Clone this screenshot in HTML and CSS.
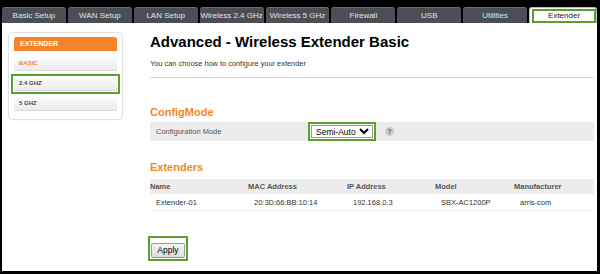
FILE: index.html
```html
<!DOCTYPE html>
<html>
<head>
<link rel="stylesheet" href="styles.css">
</head>
<body>

<div class="frame">
  <ul class="tabs">
    <li>Basic Setup</li>
    <li>WAN Setup</li>
    <li>LAN Setup</li>
    <li>Wireless 2.4 GHz</li>
    <li>Wireless 5 GHz</li>
    <li>Firewall</li>
    <li>USB</li>
    <li>Utilities</li>
    <li class="active"><span>Extender</span></li>
  </ul>

  <div class="page">
    <div class="sidebar">
      <div class="side-head">EXTENDER</div>
      <ul class="side-menu">
        <li class="current">BASIC</li>
        <li class="marked">2.4 GHZ</li>
        <li>5 GHZ</li>
      </ul>
    </div>

    <div class="main">
      <h1>Advanced - Wireless Extender Basic</h1>
      <p class="intro">You can choose how to configure your extender</p>
      <hr>

      <h2>ConfigMode</h2>
      <div class="field-row">
        <span class="field-label">Configuration Mode</span>
        <span class="marked-box">
          <select class="mode-select">
            <option>Semi-Auto</option>
            <option>Auto</option>
            <option>Manual</option>
          </select>
        </span>
        <span class="help">?</span>
      </div>

      <h2 class="extenders-title">Extenders</h2>
      <table class="ext-table">
        <tr>
          <th class="c-name">Name</th>
          <th class="c-mac">MAC Address</th>
          <th class="c-ip">IP Address</th>
          <th class="c-model">Model</th>
          <th>Manufacturer</th>
        </tr>
        <tr>
          <td>Extender-01</td>
          <td>20:3D:66:BB:10:14</td>
          <td>192.168.0.3</td>
          <td>SBX-AC1200P</td>
          <td>arris-com</td>
        </tr>
      </table>

      <div class="actions">
        <span class="marked-box">
          <button type="button" class="apply-btn">Apply</button>
        </span>
      </div>
    </div>
  </div>
</div>

</body>
</html>
```

FILE: styles.css
```css
body {
  margin: 0;
  background-color: #000;
  font-family: "Liberation Sans", Arial, Helvetica, sans-serif;
}

.frame {
  width: 600px;
  height: 274px;
  box-sizing: border-box;
  padding: 7px 3px 3px 2px;
  display: flex;
  flex-direction: column;
}

/* top tabs */
.tabs {
  list-style: none;
  margin: 0;
  padding: 0;
  display: flex;
  gap: 2px;
  height: 16px;
}

.tabs li {
  flex: 1;
  min-width: 0;
  white-space: nowrap;
  box-sizing: border-box;
  background-color: #4b4e54;
  border-top: 1px solid #6a6d72;
  border-radius: 3px 3px 0 0;
  color: #e4e4e4;
  font-size: 8px;
  line-height: 15px;
  text-align: center;
}

.tabs li.active {
  background-color: #fff;
  color: #222;
  border: 1px solid #bbb;
  border-bottom: none;
  padding: 1px 0 0 2px;
}

.tabs li.active span {
  display: block;
  border: 2px solid #5a9e2c;
  line-height: 10px;
}

.page {
  flex: 1;
  background-color: #fff;
  display: flex;
  padding: 9px 3px 0 6px;
  gap: 27px;
}

/* left menu */
.sidebar {
  width: 115px;
  height: 88px;
  box-sizing: border-box;
  border: 1px solid #e0e0e0;
  border-radius: 5px;
  padding: 4px 5px;
  box-shadow: 0 0 2px rgba(0, 0, 0, 0.08);
}

.side-head {
  background-color: #f5832a;
  color: #fff;
  font-size: 7px;
  font-weight: bold;
  height: 14px;
  line-height: 14px;
  padding-left: 6px;
  border-radius: 3px 3px 0 0;
}

.side-menu {
  list-style: none;
  margin: 6px 0 0;
  padding: 0;
}

.side-menu li {
  height: 13px;
  line-height: 13px;
  font-size: 6px;
  font-weight: bold;
  color: #444;
  padding-left: 5px;
  margin-bottom: 6px;
  background: linear-gradient(#fbfbfb, #ececec);
  border-bottom: 1px solid #dcdcdc;
}

.side-menu li.current {
  color: #f5832a;
}

.side-menu li.marked {
  outline: 2px solid #5a9e2c;
  outline-offset: 1px;
}

/* main column */
.main {
  flex: 1;
}

h1 {
  font-size: 15px;
  line-height: 20px;
  margin: 0;
  color: #000;
}

.intro {
  font-size: 7.4px;
  color: #333;
  margin: 7px 0 0;
  line-height: 10px;
}

hr {
  border: none;
  border-top: 1px solid #d6d6d6;
  margin: 8px 0 0;
}

h2 {
  font-size: 11px;
  line-height: 15px;
  color: #f5861f;
  margin: 27px 0 2px;
}

.field-row {
  display: flex;
  align-items: center;
  height: 19px;
  background-color: #ececec;
  font-size: 7.5px;
  color: #555;
}

.field-label {
  width: 152px;
  padding-left: 6px;
}

.marked-box {
  display: inline-block;
  border: 2px solid #5a9e2c;
  padding: 1px;
  background-color: #fff;
}

.mode-select {
  font-family: inherit;
  font-size: 8.5px;
  color: #000;
  height: 13px;
  padding: 0;
  border: 1px solid #999;
  background-color: #fff;
}

.help {
  width: 9px;
  height: 9px;
  border-radius: 50%;
  background-color: #ccc;
  color: #555;
  font-size: 7px;
  font-weight: bold;
  line-height: 9px;
  text-align: center;
  margin-left: 9px;
}

.extenders-title {
  margin-top: 19px;
  margin-bottom: 4px;
}

.ext-table {
  width: 100%;
  border-collapse: collapse;
  font-size: 7.5px;
}

.ext-table th {
  background-color: #ececec;
  color: #555;
  text-align: left;
  height: 15px;
  padding: 0;
}

.ext-table td {
  color: #333;
  height: 16px;
  padding: 0 0 0 6px;
  border-bottom: 1px solid #eee;
}

.c-name { width: 98px; }
.c-mac { width: 99px; }
.c-ip { width: 88px; }
.c-model { width: 79px; }

.actions {
  margin-top: 25px;
  margin-left: -2px;
}

.apply-btn {
  font-family: inherit;
  font-size: 8.5px;
  color: #000;
  width: 34px;
  height: 15px;
  padding: 0;
  border: 1px solid #999;
  border-radius: 2px;
  background: linear-gradient(#f6f6f6, #dcdcdc);
}
```
